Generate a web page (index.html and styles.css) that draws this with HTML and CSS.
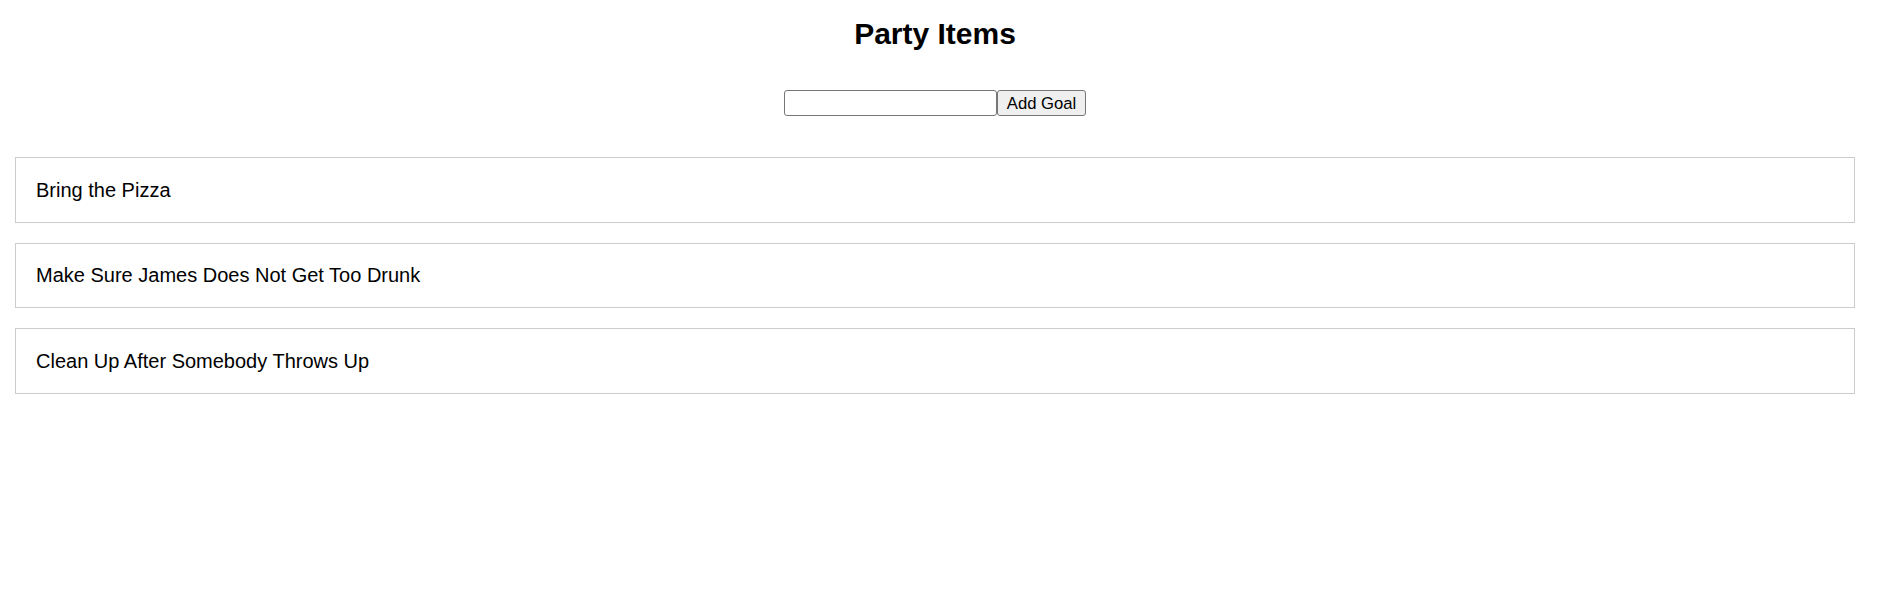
FILE: index.html
```html
<!DOCTYPE html>
<html lang="en">
<head>
<meta charset="utf-8">
<title>Party Items</title>
<link rel="stylesheet" href="styles.css">
</head>
<body>
<div class="app">
  <h1 class="title">Party Items</h1>
  <form class="goal-form">
    <input class="goal-input" type="text">
    <button class="goal-button" type="button">Add Goal</button>
  </form>
  <ul class="goal-list">
    <li class="goal-item">Bring the Pizza</li>
    <li class="goal-item">Make Sure James Does Not Get Too Drunk</li>
    <li class="goal-item">Clean Up After Somebody Throws Up</li>
  </ul>
</div>
</body>
</html>
```

FILE: styles.css
```css
html, body {
  margin: 0;
  padding: 0;
  background: #ffffff;
}

body {
  font-family: "Liberation Sans", Arial, sans-serif;
  color: #000000;
}

.app {
  width: 1840px;
  margin-left: 15px;
}

.title {
  margin: 16px 0 0;
  font-size: 30px;
  line-height: 35px;
  font-weight: bold;
  text-align: center;
}

.goal-form {
  margin: 39px 0 0;
  display: flex;
  justify-content: center;
  align-items: stretch;
}

.goal-input {
  box-sizing: border-box;
  width: 213px;
  height: 26px;
  margin: 0;
  padding: 1px 3px;
  border: 1px solid #767676;
  border-radius: 3px;
  font-family: "Liberation Sans", Arial, sans-serif;
  font-size: 16.67px;
  background: #ffffff;
}

.goal-button {
  box-sizing: border-box;
  width: 89px;
  height: 26px;
  margin: 0;
  padding: 1px 7px 0;
  border: 1px solid #767676;
  border-radius: 3px;
  background: #efefef;
  font-family: "Liberation Sans", Arial, sans-serif;
  font-size: 16.67px;
  color: #000000;
}

.goal-list {
  list-style: none;
  margin: 41px 0 0;
  padding: 0;
}

.goal-item {
  border: 1px solid #cccccc;
  padding: 20.5px 20px 20px;
  font-size: 20px;
  line-height: 23px;
  margin-bottom: 20px;
}
```
